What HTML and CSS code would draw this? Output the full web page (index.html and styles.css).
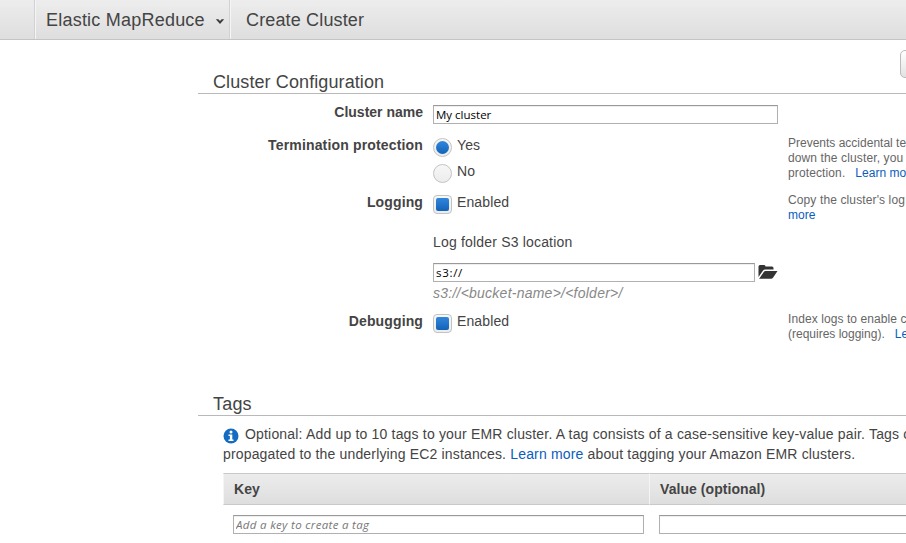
FILE: index.html
```html
<!DOCTYPE html>
<html lang="en">
<head>
<meta charset="utf-8">
<title>Create Cluster</title>
<link rel="stylesheet" href="styles.css">
</head>
<body>
<header class="nav">
  <div class="nav-home"></div>
  <div class="nav-service"><span class="t-emr">Elastic MapReduce</span>
    <svg class="chevron" width="10" height="8" viewBox="0 0 10 8"><path d="M.8 1.2h2.6L5 3l1.6-1.8h2.6L5 6z" fill="#3c3c3c"/></svg>
  </div>
  <div class="nav-page"><span class="t-create">Create Cluster</span></div>
</header>
<main class="content">
  <div class="toolbar"><button class="button" aria-label="Configure"></button></div>
  <h2 class="heading"><span class="t-config">Cluster Configuration</span></h2>
  <form class="form">
    <div class="row row-name">
      <label class="label"><span>Cluster name</span></label>
      <div class="field"><input class="input" type="text" value="My cluster"></div>
    </div>
    <div class="row row-termination">
      <span class="label"><span class="t-term">Termination protection</span></span>
      <div class="field">
        <div class="option"><i class="mark round on"></i><span>Yes</span></div>
        <div class="option"><i class="mark round"></i><span>No</span></div>
      </div>
      <p class="help">Prevents accidental termination<br><span class="help-wide">down the cluster, you must turn</span><br><span class="help-wide">protection.</span><a class="learn">Learn more</a></p>
    </div>
    <div class="row row-logging">
      <span class="label"><span class="t-log">Logging</span></span>
      <div class="field">
        <div class="option"><i class="mark on"></i><span>Enabled</span></div>
        <div class="sub-label"><span class="t-folder">Log folder S3 location</span></div>
        <div class="path">
          <input class="input input-path" type="text" value="s3://">
          <svg class="folder" width="20" height="16" viewBox="0 0 20 16"><path d="M.5 13V2.5Q.5 1 2 1h4.2q1.3 0 1.3 1.5H14q1.5 0 1.5 1.5v1.6H7.2q-1.5 0-2.3 1.1z" fill="#333"/><path d="M1.1 14.8 5.8 8q.6-1 1.8-1h11.9l-4.5 6.7q-.7 1.1-2 1.1z" fill="#333"/></svg>
        </div>
        <div class="hint"><span class="t-hint">s3://&lt;bucket-name&gt;/&lt;folder&gt;/</span></div>
      </div>
      <p class="help"><span class="help-wide">Copy the cluster's log files</span><br><a>more</a></p>
    </div>
    <div class="row row-debugging">
      <span class="label"><span class="t-log">Debugging</span></span>
      <div class="field"><div class="option"><i class="mark on"></i><span>Enabled</span></div></div>
      <p class="help"><span class="help-console">Index logs to enable console</span><br>(requires logging).<a class="learn">Learn more</a></p>
    </div>
  </form>
  <h2 class="heading heading-tags"><span class="t-tags">Tags</span></h2>
  <section class="tags">
    <p class="intro"><svg class="info" width="16" height="16" viewBox="0 0 16 16"><circle cx="8" cy="8" r="7.5" fill="#146cc0"/><circle cx="8" cy="3.9" r="1.5" fill="#fff"/><path d="M5.5 6.5h3.8v5h1.2V13h-5v-1.5h1.4V8H5.5z" fill="#fff"/></svg><span class="i1">Optional: Add up to 10 tags to your EMR cluster. A tag consists of a case-sensitive key-value pair. Tags on</span><br><span class="i2">propagated to the underlying EC2 instances. <a>Learn more</a> about tagging your Amazon EMR clusters.</span></p>
    <div class="table">
      <div class="th">Key</div>
      <div class="th">Value (optional)</div>
      <div class="td"><input class="input" type="text" placeholder="Add a key to create a tag"></div>
      <div class="td"><input class="input" type="text" aria-label="Value"></div>
    </div>
  </section>
</main>
</body>
</html>
```

FILE: styles.css
```css
* { box-sizing: border-box; }
body {
  margin: 0;
  width: 906px;
  height: 543px;
  overflow: hidden;
  background: #fff;
  color: #444;
  font: 14px/20px "Liberation Sans", Arial, sans-serif;
}
a { color: #0a5dbd; }
p { margin: 0; }

.nav {
  display: flex;
  height: 40px;
  border-bottom: 1px solid #c4c4c4;
  background: linear-gradient(#ededed, #dedede);
  font-size: 18px;
  line-height: 41px;
  white-space: nowrap;
}
.nav-home { width: 35px; border-right: 1px solid #d2d2d2; }
.nav-service {
  display: flex;
  width: 195px;
  padding-left: 10px;
  border-left: 1px solid #f5f5f5;
  border-right: 1px solid #d2d2d2;
}
.t-emr { letter-spacing: .22px; }
.t-create { letter-spacing: .15px; }
.t-config { letter-spacing: .1px; }
.t-tags { letter-spacing: .2px; }
.t-term { letter-spacing: .16px; }
.t-log { letter-spacing: .12px; }
.t-folder { letter-spacing: .18px; }
.t-hint { letter-spacing: .24px; }
.i1 { letter-spacing: .18px; }
.i2 { letter-spacing: .16px; }
.chevron { margin: 18px 0 0 10px; }
.nav-page { padding-left: 15px; border-left: 1px solid #f5f5f5; }

.content { width: 708px; margin-left: 198px; overflow: hidden; }
.toolbar { height: 30px; padding: 10px 0 0 702px; }
.button {
  display: block;
  width: 80px;
  height: 28px;
  border: 1px solid #bbb;
  border-radius: 5px;
  background: linear-gradient(#fff, #e2e2e2);
}
.heading {
  height: 24px;
  margin: 0;
  padding-left: 15px;
  border-bottom: 1px solid #b9b9b9;
  font-size: 18px;
  font-weight: normal;
  line-height: 24px;
  white-space: nowrap;
}
.form { height: 298px; padding-top: 8px; }
.row {
  display: grid;
  grid-template-columns: 225px 345px 200px;
  column-gap: 10px;
}
.row-name { height: 33px; }
.row-termination { height: 57px; }
.row-logging { height: 119px; }
.label { font-weight: bold; text-align: right; white-space: nowrap; }
.row-name .input { margin-top: 3px; }
.option { display: flex; height: 26px; gap: 5px; letter-spacing: .12px; }
.mark {
  display: block;
  width: 19px;
  height: 19px;
  margin-top: 3px;
  border: 1px solid #c3c3c3;
  border-radius: 4px;
  background: linear-gradient(#f7f7f7, #ececec);
}
.mark.on::after {
  content: "";
  display: block;
  width: 13px;
  height: 13px;
  margin: 2px;
  border-radius: 2px;
  background: linear-gradient(#3186dc, #1263b8);
}
.mark.round, .mark.round::after { border-radius: 50%; }
.input {
  display: block;
  width: 100%;
  height: 19px;
  padding: 0 2px 1px;
  border: 1px solid #b0b0b0;
  border-top-color: #999;
  border-radius: 0;
  background: #fff;
  box-shadow: inset 0 1px 1px #eee;
  color: #000;
  font: 11.5px/16px "Open Sans", sans-serif;
}
.input::placeholder { color: #777; font-style: italic; letter-spacing: .32px; opacity: 1; }
.sub-label { margin-top: 14px; }
.path { display: flex; gap: 3px; margin-top: 11px; }
.input-path { width: 322px; letter-spacing: .7px; }
.folder { flex: none; margin-top: 1px; }
.hint { margin-top: 1px; color: #888; font-style: italic; }
.help { padding-top: 1px; color: #666; font-size: 12px; line-height: 15px; white-space: nowrap; }
.help-wide { letter-spacing: .12px; }
.help-console { letter-spacing: .08px; }
.learn { margin-left: 10px; }

.tags { padding-left: 25px; }
.intro { height: 57px; padding-top: 8px; white-space: nowrap; }
.info { margin-right: 6px; vertical-align: -5px; }
.table { display: grid; grid-template-columns: 426px 426px; }
.th {
  height: 32px;
  padding-left: 10px;
  border-top: 1px solid #c9c9c9;
  border-bottom: 1px solid #c9c9c9;
  border-left: 1px solid #f5f5f5;
  background: linear-gradient(#ececec, #dedede);
  font-weight: bold;
  line-height: 31px;
  letter-spacing: .06px;
}
.td { padding: 10px 5px 0 10px; }
```
